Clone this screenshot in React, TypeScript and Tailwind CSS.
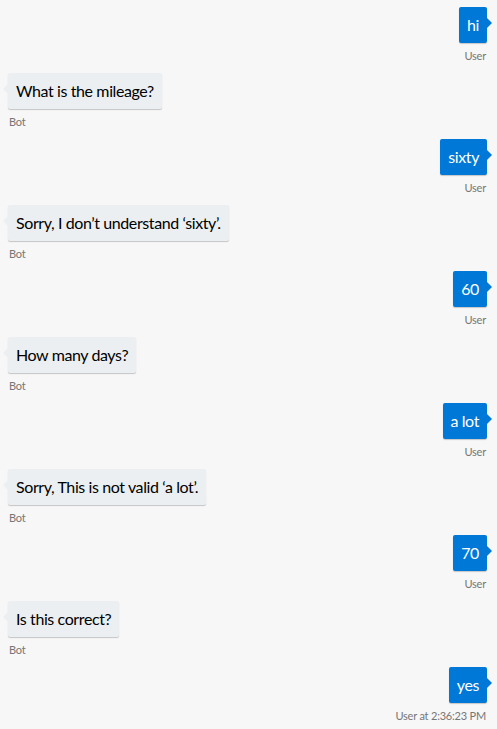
import React from 'react';

type Msg = { from: 'user' | 'bot'; text: string; label?: string };

const MESSAGES: Msg[] = [
  { from: 'user', text: 'hi' },
  { from: 'bot', text: 'What is the mileage?' },
  { from: 'user', text: 'sixty' },
  { from: 'bot', text: 'Sorry, I don’t understand ‘sixty’.' },
  { from: 'user', text: '60' },
  { from: 'bot', text: 'How many days?' },
  { from: 'user', text: 'a lot' },
  { from: 'bot', text: 'Sorry, This is not valid ‘a lot’.' },
  { from: 'user', text: '70' },
  { from: 'bot', text: 'Is this correct?' },
  { from: 'user', text: 'yes', label: 'User at 2:36:23 PM' },
];

const Bubble: React.FC<{ msg: Msg }> = ({ msg }) => {
  const isUser = msg.from === 'user';
  return (
    <div className={`flex flex-col ${isUser ? 'items-end pr-[10px]' : 'items-start pl-[8px]'} mb-[9px]`}>
      <div
        className={`relative h-[36px] px-[8px] flex items-center rounded-[2px] text-[16px] leading-[20px] tracking-[-0.4px] shadow-[0_1px_1px_0_rgba(0,0,0,0.2)] ${
          isUser ? 'bg-[#0078d7] text-white' : 'bg-[#eceff1] text-black'
        }`}
      >
        {msg.text}
        {isUser ? (
          <svg className="absolute top-[11px] -right-[5px]" width="5" height="10" viewBox="0 0 5 10">
            <polygon points="0,0 5,5 0,10" fill="#0078d7" />
          </svg>
        ) : (
          <svg className="absolute top-[11px] -left-[5px]" width="5" height="10" viewBox="0 0 5 10">
            <polygon points="5,0 0,5 5,10" fill="#eceff1" />
          </svg>
        )}
      </div>
      <div className={`mt-[5px] h-[16px] text-[11px] leading-[16px] tracking-[-0.2px] text-[#767676] ${isUser ? 'pr-[1px]' : 'pl-[1px]'}`}>
        {msg.label ?? (isUser ? 'User' : 'Bot')}
      </div>
    </div>
  );
};

export default function App() {
  return (
    <div
      className="w-[497px] h-[729px] overflow-hidden bg-[#f7f7f7] pt-[7px]"
      style={{ fontFamily: '"Segoe UI", Lato, "Open Sans", sans-serif' }}
    >
      {MESSAGES.map((m, i) => (
        <Bubble key={i} msg={m} />
      ))}
    </div>
  );
}
